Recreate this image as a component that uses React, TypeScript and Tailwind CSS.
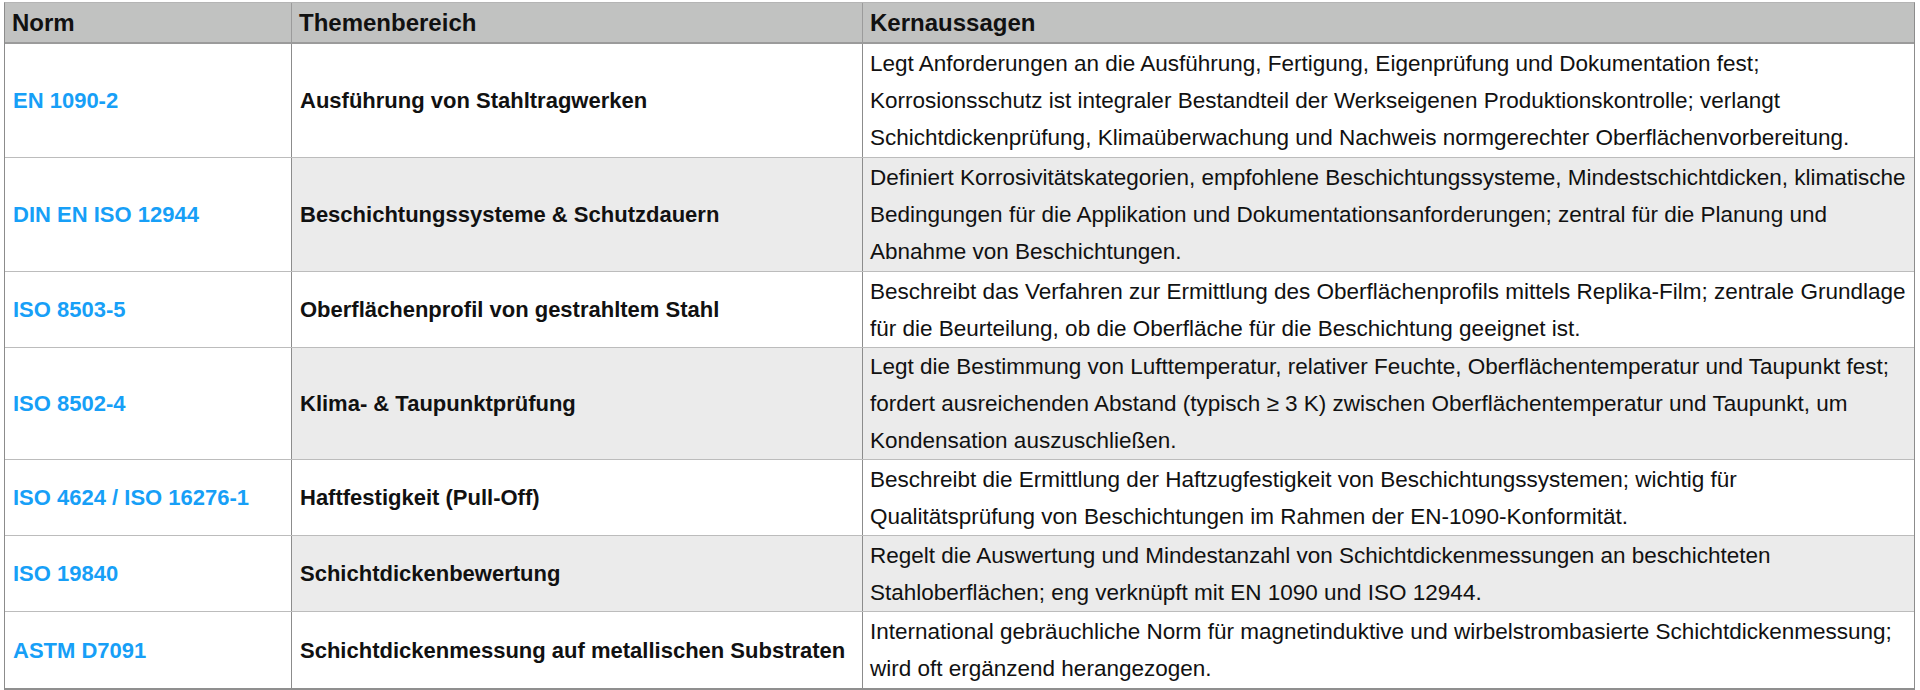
const rows = [
  {
    norm: "EN 1090-2",
    topic: "Ausführung von Stahltragwerken",
    h: "h-[114px]",
    bg: "bg-white",
    lines: [
      "Legt Anforderungen an die Ausführung, Fertigung, Eigenprüfung und Dokumentation fest;",
      "Korrosionsschutz ist integraler Bestandteil der Werkseigenen Produktionskontrolle; verlangt",
      "Schichtdickenprüfung, Klimaüberwachung und Nachweis normgerechter Oberflächenvorbereitung.",
    ],
  },
  {
    norm: "DIN EN ISO 12944",
    topic: "Beschichtungssysteme & Schutzdauern",
    h: "h-[114px]",
    bg: "bg-[#ebebeb]",
    lines: [
      "Definiert Korrosivitätskategorien, empfohlene Beschichtungssysteme, Mindestschichtdicken, klimatische",
      "Bedingungen für die Applikation und Dokumentationsanforderungen; zentral für die Planung und",
      "Abnahme von Beschichtungen.",
    ],
  },
  {
    norm: "ISO 8503-5",
    topic: "Oberflächenprofil von gestrahltem Stahl",
    h: "h-[76px]",
    bg: "bg-white",
    lines: [
      "Beschreibt das Verfahren zur Ermittlung des Oberflächenprofils mittels Replika-Film; zentrale Grundlage",
      "für die Beurteilung, ob die Oberfläche für die Beschichtung geeignet ist.",
    ],
  },
  {
    norm: "ISO 8502-4",
    topic: "Klima- & Taupunktprüfung",
    h: "h-[112px]",
    bg: "bg-[#ebebeb]",
    lines: [
      "Legt die Bestimmung von Lufttemperatur, relativer Feuchte, Oberflächentemperatur und Taupunkt fest;",
      "fordert ausreichenden Abstand (typisch ≥ 3 K) zwischen Oberflächentemperatur und Taupunkt, um",
      "Kondensation auszuschließen.",
    ],
  },
  {
    norm: "ISO 4624 / ISO 16276-1",
    topic: "Haftfestigkeit (Pull-Off)",
    h: "h-[76px]",
    bg: "bg-white",
    lines: [
      "Beschreibt die Ermittlung der Haftzugfestigkeit von Beschichtungssystemen; wichtig für",
      "Qualitätsprüfung von Beschichtungen im Rahmen der EN-1090-Konformität.",
    ],
  },
  {
    norm: "ISO 19840",
    topic: "Schichtdickenbewertung",
    h: "h-[76px]",
    bg: "bg-[#ebebeb]",
    lines: [
      "Regelt die Auswertung und Mindestanzahl von Schichtdickenmessungen an beschichteten",
      "Stahloberflächen; eng verknüpft mit EN 1090 und ISO 12944.",
    ],
  },
  {
    norm: "ASTM D7091",
    topic: "Schichtdickenmessung auf metallischen Substraten",
    h: "h-[76px]",
    bg: "bg-white",
    lines: [
      "International gebräuchliche Norm für magnetinduktive und wirbelstrombasierte Schichtdickenmessung;",
      "wird oft ergänzend herangezogen.",
    ],
  },
];

export default function App() {
  return (
    <div className="min-h-screen bg-white pl-[4px] pt-[2px] font-['Liberation_Sans',Arial,sans-serif] text-[22px] text-[#111]">
      <div className="w-[1911px] border-x border-t border-b-2 border-x-[#8c8c8c] border-t-[#b5b5b5] border-b-[#8f8f8f]">
        {/* Header */}
        <div className="grid h-[41px] grid-cols-[287px_571px_1fr] border-b-2 border-[#9b9b9b] bg-[#c1c2c1] text-[24px] font-bold">
          <div className="flex items-center border-r border-[#9b9b9b] px-[7px]">Norm</div>
          <div className="flex items-center border-r border-[#9b9b9b] px-[7px]">Themenbereich</div>
          <div className="flex items-center px-[7px]">Kernaussagen</div>
        </div>

        {/* Body */}
        {rows.map((row, i) => (
          <div
            key={row.norm}
            className={`grid grid-cols-[287px_571px_1fr] overflow-hidden ${row.h} ${row.bg} ${
              i < rows.length - 1 ? "border-b border-[#bcbcbc]" : ""
            }`}
          >
            <div className="flex items-center whitespace-nowrap border-r border-[#8c8c8c] bg-white px-[8px] font-bold text-[#179ff7]">
              {row.norm}
            </div>
            <div className="flex items-center whitespace-nowrap border-r border-[#8c8c8c] px-[8px] font-bold">
              {row.topic}
            </div>
            <div className="flex flex-col justify-center whitespace-nowrap px-[7px] text-[22.5px] leading-[37px]">
              {row.lines.map((line) => (
                <span key={line}>{line}</span>
              ))}
            </div>
          </div>
        ))}
      </div>
    </div>
  );
}
